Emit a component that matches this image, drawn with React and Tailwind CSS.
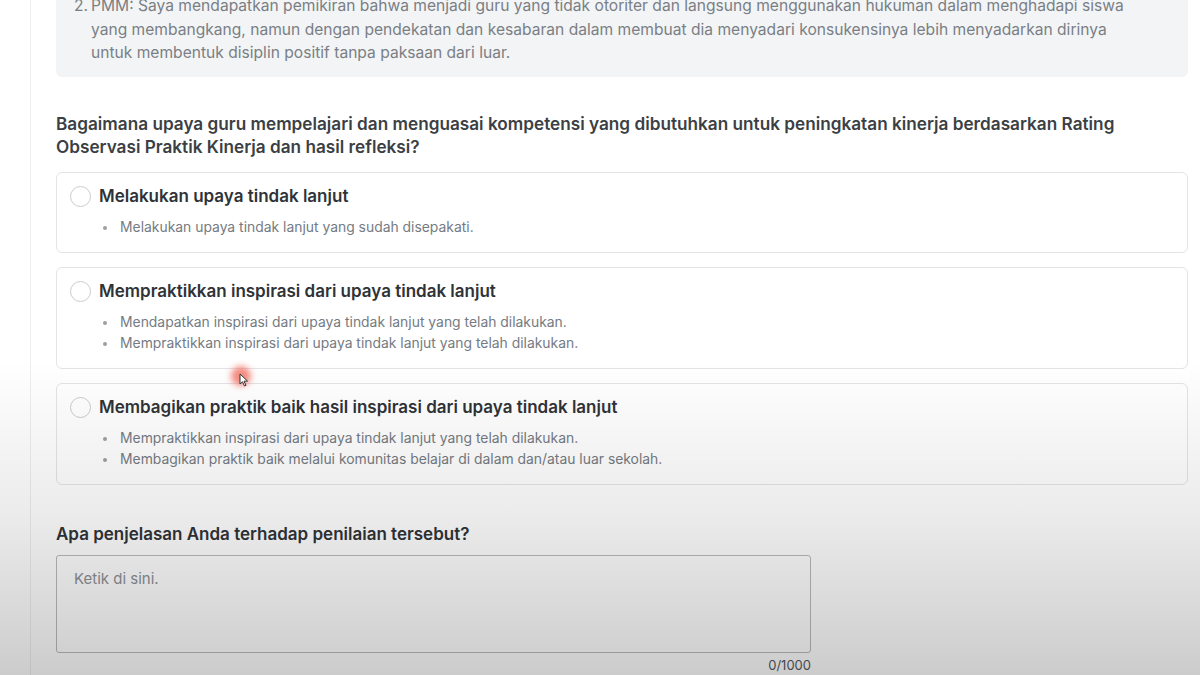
import React from 'react';

const options = [
  {
    title: 'Melakukan upaya tindak lanjut',
    points: ['Melakukan upaya tindak lanjut yang sudah disepakati.'],
  },
  {
    title: 'Mempraktikkan inspirasi dari upaya tindak lanjut',
    points: [
      'Mendapatkan inspirasi dari upaya tindak lanjut yang telah dilakukan.',
      'Mempraktikkan inspirasi dari upaya tindak lanjut yang telah dilakukan.',
    ],
  },
  {
    title: 'Membagikan praktik baik hasil inspirasi dari upaya tindak lanjut',
    points: [
      'Mempraktikkan inspirasi dari upaya tindak lanjut yang telah dilakukan.',
      'Membagikan praktik baik melalui komunitas belajar di dalam dan/atau luar sekolah.',
    ],
  },
];

function OptionCard({ title, points }) {
  return (
    <label className="block rounded-md border border-[#e3e4e7] bg-white px-[13px] pt-3 pb-[14px] cursor-pointer">
      <div className="flex items-center gap-[8px] h-6">
        <span className="w-[21px] h-[21px] rounded-full border-[1.5px] border-[#c9cbcf] bg-white shrink-0" />
        <span className="text-[17px] font-semibold text-[#2f3337]">{title}</span>
      </div>
      <ul className="mt-2 pl-[48px] list-disc text-[13.9px] leading-[21px] text-[#757b83] marker:text-[#9aa0a6]">
        {points.map((p, i) => (
          <li key={i} className="pl-[2px]">{p}</li>
        ))}
      </ul>
    </label>
  );
}

export default function App() {
  return (
    <div className="relative w-[1200px] h-[675px] overflow-hidden bg-white" style={{ fontFamily: 'Inter, "Noto Sans", sans-serif' }}>
      <div className="flex flex-col h-full ml-[30px] border-l border-[#eeeeee] pl-[25px] pr-[12px]">
        {/* previous answer box */}
        <div className="-mt-[18px] rounded-md bg-[#f3f4f6] pl-[18px] pr-4 pt-[12px] pb-[12px] text-[15.6px] leading-[23.5px] text-[#7a7f85]">
          <div className="flex">
            <span className="w-[17px] shrink-0">2.</span>
            <p className="whitespace-nowrap">
              PMM: Saya mendapatkan pemikiran bahwa menjadi guru yang tidak otoriter dan langsung menggunakan hukuman dalam menghadapi siswa
              <br />
              yang membangkang, namun dengan pendekatan dan kesabaran dalam membuat dia menyadari konsukensinya lebih menyadarkan dirinya
              <br />
              untuk membentuk disiplin positif tanpa paksaan dari luar.
            </p>
          </div>
        </div>

        {/* question */}
        <h2 className="mt-[35px] text-[17.2px] leading-[23px] font-semibold text-[#3b3f44] whitespace-nowrap">
          Bagaimana upaya guru mempelajari dan menguasai kompetensi yang dibutuhkan untuk peningkatan kinerja berdasarkan Rating
          <br />
          Observasi Praktik Kinerja dan hasil refleksi?
        </h2>

        <div className="mt-[14px] flex flex-col gap-[14px]">
          {options.map((o, i) => (
            <OptionCard key={i} {...o} />
          ))}
        </div>

        {/* explanation */}
        <p className="mt-[37px] text-[17px] leading-6 font-semibold text-[#2f3337]">
          Apa penjelasan Anda terhadap penilaian tersebut?
        </p>
        <div className="mt-[9px] w-[755px]">
          <textarea
            placeholder="Ketik di sini."
            className="block w-full h-[98px] resize-none rounded-[3px] border border-[#b9bbbe] bg-white px-[17px] py-[12px] text-[15px] text-[#333] placeholder:text-[#8d9196] outline-none"
          />
          <div className="mt-[3px] text-right text-[13px] text-[#55595e]">0/1000</div>
        </div>
      </div>

      {/* video darkening toward the bottom */}
      <div className="pointer-events-none absolute inset-x-0 top-[360px] bottom-0 bg-gradient-to-b from-transparent via-black/[0.08] to-black/[0.2]" />

      {/* mouse cursor with click highlight */}
      <div className="pointer-events-none absolute left-[231px] top-[366px]">
        <div className="w-[20px] h-[20px] rounded-full bg-[#f05a4a]/70 blur-[3px]" />
        <svg className="absolute left-[8px] top-[7px]" width="10" height="14" viewBox="0 0 10 14">
          <path d="M1 1 L1 11 L3.5 8.8 L5.5 13 L7 12.3 L5 8.2 L8.5 8 Z" fill="#ffffff" stroke="#333" strokeWidth="1" strokeLinejoin="round" />
        </svg>
      </div>
    </div>
  );
}
